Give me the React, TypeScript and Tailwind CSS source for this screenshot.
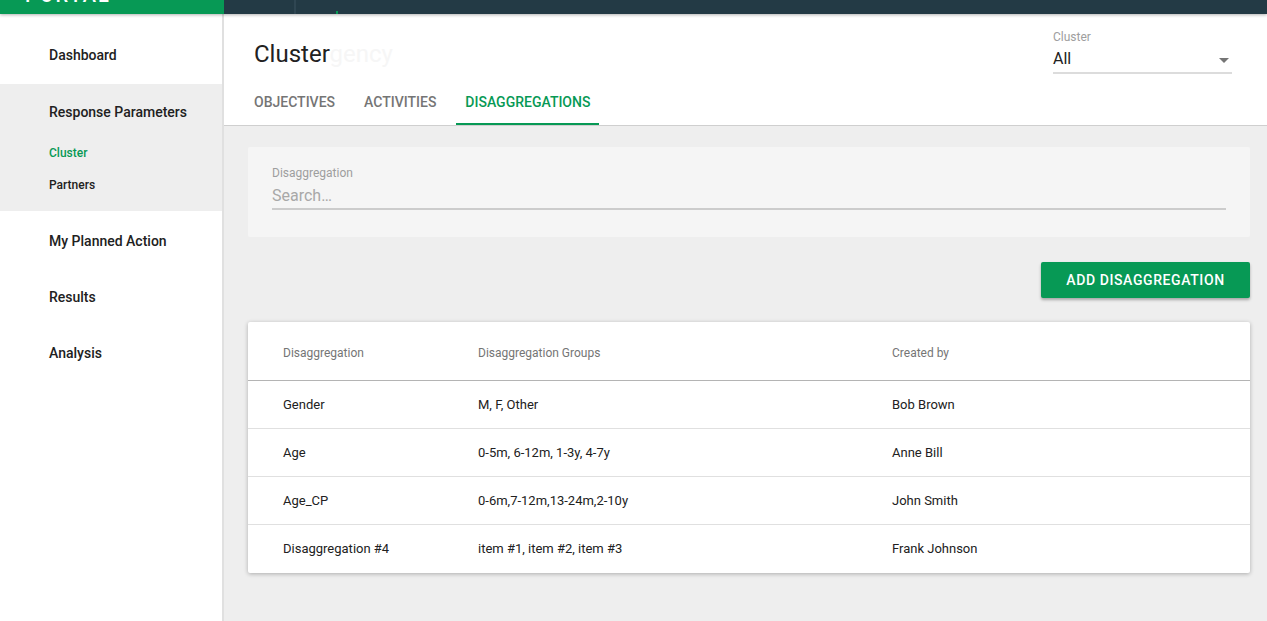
import React from 'react';

const GREEN = 'text-[#079955]';

type Row = { name: string; groups: string; createdBy: string };

const rows: Row[] = [
    { name: 'Gender', groups: 'M, F, Other', createdBy: 'Bob Brown' },
    { name: 'Age', groups: '0-5m, 6-12m, 1-3y, 4-7y', createdBy: 'Anne Bill' },
    { name: 'Age_CP', groups: '0-6m,7-12m,13-24m,2-10y', createdBy: 'John Smith' },
    { name: 'Disaggregation #4', groups: 'item #1, item #2, item #3', createdBy: 'Frank Johnson' },
];

const TopBar: React.FC = () => (
    <div className="relative z-10 flex h-[14px] shrink-0 shadow-[0_1px_3px_rgba(0,0,0,0.3)]">
        <div className="w-[224px] shrink-0 overflow-hidden bg-[#079955]">
            <div className="-mt-[20px] pl-[25px] text-[20px] font-medium tracking-[2px] text-white">PORTAL</div>
        </div>
        <div className="flex flex-1 bg-[#233a45]">
            <div className="w-[72px] border-r-2 border-[#2f4652]" />
            <div className="ml-[40px] mt-[11px] h-[3px] w-[2px] bg-[#079955]" />
        </div>
    </div>
);

const Sidebar: React.FC = () => (
    <aside className="w-[224px] shrink-0 border-r-2 border-[#e0e0e0] bg-white pt-[13px] text-[14px] font-medium text-[#212121]">
        <div className="flex h-[56px] items-center pl-[49px]">Dashboard</div>
        <div className="mt-[1px] bg-[#eeeeee] pb-[10px]">
            <div className="flex h-[56px] items-center pl-[49px]">Response Parameters</div>
            <div className={`-mt-[3px] flex h-8 items-center pl-[49px] text-[12px] ${GREEN}`}>Cluster</div>
            <div className="flex h-8 items-center pl-[49px] text-[12px]">Partners</div>
        </div>
        <div className="mt-[2px] flex h-[56px] items-center pl-[49px]">My Planned Action</div>
        <div className="flex h-[56px] items-center pl-[49px]">Results</div>
        <div className="flex h-[56px] items-center pl-[49px]">Analysis</div>
    </aside>
);

const Header: React.FC = () => (
    <header className="border-b border-[#cfcfcf] bg-white pl-[30px] pr-[35px]">
        <div className="flex items-start justify-between">
            <h1 className="pt-[24px] text-[24px] leading-8 text-[#212121]">
                Cluster<span className="text-[#f6f6f6]">gency</span>
            </h1>
            <div className="w-[179px] pt-[15px]">
                <div className="text-[12px] leading-4 text-[#9e9e9e]">Cluster</div>
                <div className="mt-[2px] flex items-center justify-between border-b-2 border-[#dcdcdc] pb-[1px]">
                    <span className="text-[16px] leading-6 text-[#212121]">All</span>
                    <svg width="10" height="5" viewBox="0 0 10 5" className="mr-[3px] mt-[2px]">
                        <path d="M0 0h10L5 5z" fill="#757575" />
                    </svg>
                </div>
            </div>
        </div>
        <nav className="-ml-[9px] mt-[3px] flex gap-[11px] text-[14px] font-medium uppercase">
            <div className="flex h-12 items-center px-[9px] pt-[2px] text-[#757575]">Objectives</div>
            <div className="flex h-12 items-center px-[9px] pt-[2px] text-[#757575]">Activities</div>
            <div className={`flex h-12 items-center border-b-2 border-[#079955] px-[9px] pt-[4px] ${GREEN}`}>Disaggregations</div>
        </nav>
    </header>
);

const SearchCard: React.FC = () => (
    <div className="rounded-[2px] bg-[#f5f5f5] px-6 pb-[27px] pt-[18px]">
        <div className="text-[12px] leading-4 text-[#9e9e9e]">Disaggregation</div>
        <div className="mt-[3px] border-b-2 border-[#cccccc] text-[16px] leading-6 text-[#a8a8a8]">Search…</div>
    </div>
);

const DisaggregationTable: React.FC = () => (
    <div className="rounded-[2px] bg-white shadow-[0_1px_4px_rgba(0,0,0,0.28)]">
        <div className="grid h-[59px] grid-cols-[195px_414px_1fr] items-center border-b border-[#b4b4b4] pl-[35px] text-[12px] text-[#757575]">
            <div className="pt-[3px]">Disaggregation</div>
            <div className="pt-[3px]">Disaggregation Groups</div>
            <div className="pt-[3px]">Created by</div>
        </div>
        {rows.map((row, i) => (
            <div
                key={row.name}
                className={`grid h-[48px] grid-cols-[195px_414px_1fr] items-center pl-[35px] text-[13px] text-[#212121] ${i < rows.length - 1 ? 'border-b border-[#e0e0e0]' : ''}`}
            >
                <div>{row.name}</div>
                <div>{row.groups}</div>
                <div>{row.createdBy}</div>
            </div>
        ))}
    </div>
);

export default function App() {
    return (
        <div className="flex h-[621px] flex-col overflow-hidden bg-[#eeeeee] font-['Roboto',sans-serif]">
            <TopBar />
            <div className="flex flex-1">
                <Sidebar />
                <main className="flex-1">
                    <Header />
                    <div className="pl-6 pr-[17px] pt-[21px]">
                        <SearchCard />
                        <div className="mt-[25px] flex justify-end">
                            <button className="h-9 w-[209px] rounded-[2px] bg-[#079955] text-[14px] font-medium uppercase tracking-[0.6px] text-white shadow-[0_2px_3px_rgba(0,0,0,0.3)]">
                                Add Disaggregation
                            </button>
                        </div>
                        <div className="mt-6">
                            <DisaggregationTable />
                        </div>
                    </div>
                </main>
            </div>
        </div>
    );
}
